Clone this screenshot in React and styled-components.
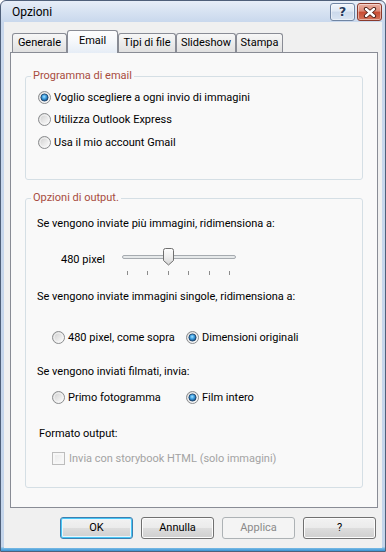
import React from 'react';
import styled, { createGlobalStyle } from 'styled-components';

const FONT = `Roboto, "Noto Sans", "Liberation Sans", sans-serif`;

const GlobalStyle = createGlobalStyle`
  html, body { margin: 0; padding: 0; background: #ffffff; }
  body { font-family: ${FONT}; }
  * { box-sizing: border-box; }
`;

const Window = styled.div`
  width: 386px;
  height: 552px;
  display: flex;
  flex-direction: column;
  border: 1px solid #4f607a;
  border-radius: 6px 6px 0 0;
  padding: 0 3px 3px;
  background: linear-gradient(
    to bottom,
    #e7eef8 0px,
    #d5e1f1 12px,
    #c9d8ed 21px,
    #c4d5eb calc(100% - 4px),
    #7bbce6 calc(100% - 3px),
    #3a93d3 100%
  );
  font-family: ${FONT};
  font-size: 11px;
  color: #000;
  overflow: hidden;
`;

const TitleBar = styled.div`
  height: 21px;
  flex-shrink: 0;
  display: flex;
  align-items: flex-start;
`;

const Title = styled.div`
  flex: 1;
  padding-left: 8px;
  font-size: 12px;
  line-height: 22px;
  color: #000;
`;

const CaptionButtons = styled.div`
  display: flex;
  gap: 2px;
  margin-top: 2px;
`;

const CaptionButton = styled.div`
  width: 25px;
  height: 18px;
  border-radius: 3px;
  border: 1px solid ${p => (p.$close ? '#8a3a2c' : '#7085a3')};
  background: ${p =>
    p.$close
      ? 'linear-gradient(#eab0a2 0%, #dc8a77 45%, #c84a30 50%, #d3735a 100%)'
      : 'linear-gradient(#f1f5fb 0%, #dfe8f4 45%, #cbd9eb 50%, #d9e4f2 100%)'};
  box-shadow: inset 0 0 0 1px rgba(255, 255, 255, 0.45);
  display: flex;
  align-items: center;
  justify-content: center;
`;

const HelpGlyph = styled.span`
  font-family: "DejaVu Sans", ${FONT};
  font-weight: bold;
  font-size: 13px;
  line-height: 16px;
  color: #253a5c;
  text-shadow: 0 0 1px #fff, 0 0 1px #fff, 0 0 2px #fff;
`;

const Client = styled.div`
  flex: 1;
  display: flex;
  flex-direction: column;
  background: #f0f0f0;
  padding: 8px 4px 0 6px;
`;

const TabStrip = styled.div`
  height: 22px;
  flex-shrink: 0;
  display: flex;
  align-items: flex-end;
  padding-left: 2px;
  position: relative;
  z-index: 1;
`;

const Tab = styled.div`
  width: ${p => p.$w}px;
  height: ${p => (p.$active ? 23 : 19)}px;
  margin-bottom: ${p => (p.$active ? -1 : 0)}px;
  padding-top: ${p => (p.$active ? 1 : 0)}px;
  border: 1px solid #898c95;
  border-bottom: none;
  border-radius: 3px 3px 0 0;
  background: ${p =>
    p.$active
      ? 'linear-gradient(#fdfdfe 0%, #f6f8fb 45%, #e6edf6 100%)'
      : 'linear-gradient(#f7f7f7 0%, #ececec 50%, #e0e0e0 100%)'};
  text-align: center;
  line-height: 18px;
  white-space: nowrap;
  color: #000;
`;

const Panel = styled.div`
  flex: 1;
  display: flex;
  flex-direction: column;
  border: 1px solid #898c95;
  background: #f9f9f9;
  padding: 16px 14px 0;
`;

const Group = styled.fieldset`
  margin: ${p => p.$top || 0}px 0 0;
  padding: 0;
  border: 1px solid #d5dfe5;
  border-radius: 3px;
  min-width: 0;
`;

const Legend = styled.legend`
  margin-left: 5px;
  padding: 0 2px;
  line-height: 14px;
  font-size: 11px;
  color: #a84c40;
`;

const GroupBody = styled.div`
  display: flex;
  flex-direction: column;
  padding: ${p => p.$pad};
`;

const StackOption = styled.label`
  height: 22.5px;
  display: flex;
  align-items: center;
  gap: 3px;
  white-space: nowrap;
`;

const Line = styled.div`
  height: 20px;
  line-height: 20px;
  margin-top: ${p => p.$top}px;
  padding-left: ${p => p.$indent || 0}px;
  white-space: nowrap;
`;

const SliderRow = styled.div`
  height: 34px;
  margin-top: ${p => p.$top}px;
  padding-left: 24px;
  display: flex;
  align-items: flex-start;
`;

const SliderLabel = styled.span`
  width: 61px;
  margin-top: 10px;
  line-height: 16px;
  white-space: nowrap;
`;

const Slider = styled.div`
  position: relative;
  width: 114px;
  padding-top: 13px;
`;

const Track = styled.div`
  height: 4px;
  border: 1px solid #a6abb0;
  border-radius: 2px;
  background: #e6e9ea;
`;

const Ticks = styled.div`
  display: flex;
  justify-content: space-between;
  padding: 0 6px 0 5px;
  margin-top: 12px;
`;

const Tick = styled.span`
  width: 1px;
  height: 4px;
  background: #8c8c8c;
`;

const ThumbSvg = styled.svg`
  position: absolute;
  top: 6px;
  display: block;
`;

const OptionRow = styled.div`
  height: 20px;
  margin-top: ${p => p.$top}px;
  padding-left: 15px;
  display: grid;
  grid-template-columns: 134px auto;
  align-items: center;
`;

const Option = styled.label`
  display: flex;
  align-items: center;
  gap: 3px;
  white-space: nowrap;
`;

const CheckRow = styled.label`
  height: 20px;
  margin-top: ${p => p.$top}px;
  padding-left: 15px;
  display: flex;
  align-items: center;
  gap: 4px;
  color: #a3a3a3;
  white-space: nowrap;
`;

const CheckBox = styled.span`
  width: 13px;
  height: 13px;
  border: 1px solid #bdbdbd;
  background: linear-gradient(135deg, #e9e9e9, #fbfbfb);
  box-shadow: inset 0 0 0 2px #f7f7f7;
`;

const ButtonRow = styled.div`
  flex-shrink: 0;
  display: flex;
  justify-content: flex-end;
  gap: 8px;
  padding: 9px 2px 9px 0;
`;

const Button = styled.button`
  width: 73px;
  height: 22px;
  padding: 0;
  border-radius: 3px;
  font-family: ${FONT};
  font-size: 11px;
  line-height: 20px;
  border: 1px solid ${p => (p.$default ? '#3c7fb1' : p.disabled ? '#adb2b5' : '#707070')};
  color: ${p => (p.disabled ? '#8a8a8a' : '#000')};
  background: ${p =>
    p.disabled
      ? '#f4f4f4'
      : 'linear-gradient(#f2f2f2 0%, #ebebeb 50%, #dddddd 50%, #cfcfcf 100%)'};
  box-shadow: ${p =>
    p.$default
      ? 'inset 0 0 0 1px #48c6f5, inset 0 0 0 2px #e8f6fd'
      : p.disabled
      ? 'none'
      : 'inset 0 0 0 1px #fcfcfc'};
`;

const Radio = ({ checked }) => (
  <svg width="13" height="13" viewBox="0 0 13 13" style={{ display: 'block', flexShrink: 0 }}>
    <defs>
      <linearGradient id="rbg" x1="0" y1="0" x2="1" y2="1">
        <stop offset="0" stopColor="#c9c9c9" />
        <stop offset="0.6" stopColor="#ececec" />
        <stop offset="1" stopColor="#ffffff" />
      </linearGradient>
      <radialGradient id="rdot" cx="0.45" cy="0.4" r="0.65">
        <stop offset="0" stopColor="#a6e2ff" />
        <stop offset="0.45" stopColor="#3c9ee0" />
        <stop offset="1" stopColor="#0f3c6e" />
      </radialGradient>
    </defs>
    <circle cx="6.5" cy="6.5" r="6" fill="url(#rbg)" stroke="#8a8c8e" />
    <circle cx="6.5" cy="6.5" r="4.5" fill="none" stroke="#f6f6f6" strokeWidth="0.8" />
    {checked && <circle cx="6.5" cy="6.5" r="3.6" fill="url(#rdot)" stroke="#1b3f66" strokeWidth="0.8" />}
  </svg>
);

const Thumb = ({ left }) => (
  <ThumbSvg width="11" height="18" viewBox="0 0 11 18" style={{ left }}>
    <defs>
      <linearGradient id="thg" x1="0" y1="0" x2="0" y2="1">
        <stop offset="0" stopColor="#fefefe" />
        <stop offset="0.5" stopColor="#eeeeee" />
        <stop offset="1" stopColor="#d4d4d4" />
      </linearGradient>
    </defs>
    <path
      d="M0.5 2.5 Q0.5 0.5 2.5 0.5 H8.5 Q10.5 0.5 10.5 2.5 V12.5 L5.5 17 L0.5 12.5 Z"
      fill="url(#thg)"
      stroke="#6f6f6f"
    />
  </ThumbSvg>
);

const CloseIcon = () => (
  <svg width="14" height="11" viewBox="0 0 14 11" style={{ display: 'block' }}>
    <path d="M3 2 L11 9 M11 2 L3 9" stroke="#4b1d14" strokeWidth="4.2" strokeLinecap="round" />
    <path d="M3 2 L11 9 M11 2 L3 9" stroke="#ffffff" strokeWidth="2.4" strokeLinecap="round" />
  </svg>
);

const tabs = [
  { label: 'Generale', w: 55 },
  { label: 'Email', w: 51, active: true },
  { label: 'Tipi di file', w: 58 },
  { label: 'Slideshow', w: 60 },
  { label: 'Stampa', w: 47 },
];

const TICKS = 6;
const sliderValue = 2;

export default function App() {
  const thumbLeft = Math.round((sliderValue * 102) / (TICKS - 1));
  return (
    <>
      <GlobalStyle />
      <Window>
        <TitleBar>
          <Title>Opzioni</Title>
          <CaptionButtons>
            <CaptionButton>
              <HelpGlyph>?</HelpGlyph>
            </CaptionButton>
            <CaptionButton $close>
              <CloseIcon />
            </CaptionButton>
          </CaptionButtons>
        </TitleBar>
        <Client>
          <TabStrip>
            {tabs.map(t => (
              <Tab key={t.label} $w={t.w} $active={t.active}>
                {t.label}
              </Tab>
            ))}
          </TabStrip>
          <Panel>
            <Group>
              <Legend>Programma di email</Legend>
              <GroupBody $pad="3px 12px 25.5px">
                <StackOption>
                  <Radio checked />
                  Voglio scegliere a ogni invio di immagini
                </StackOption>
                <StackOption>
                  <Radio />
                  Utilizza Outlook Express
                </StackOption>
                <StackOption>
                  <Radio />
                  Usa il mio account Gmail
                </StackOption>
              </GroupBody>
            </Group>
            <Group $top={11}>
              <Legend>Opzioni di output.</Legend>
              <GroupBody $pad="0 11px 19px">
                <Line $top={9}>Se vengono inviate più immagini, ridimensiona a:</Line>
                <SliderRow $top={8}>
                  <SliderLabel>480 pixel</SliderLabel>
                  <Slider>
                    <Track />
                    <Ticks>
                      {Array.from({ length: TICKS }).map((_, i) => (
                        <Tick key={i} />
                      ))}
                    </Ticks>
                    <Thumb left={thumbLeft} />
                  </Slider>
                </SliderRow>
                <Line $top={11}>Se vengono inviate immagini singole, ridimensiona a:</Line>
                <OptionRow $top={20}>
                  <Option>
                    <Radio />
                    480 pixel, come sopra
                  </Option>
                  <Option>
                    <Radio checked />
                    Dimensioni originali
                  </Option>
                </OptionRow>
                <Line $top={15}>Se vengono inviati filmati, invia:</Line>
                <OptionRow $top={5}>
                  <Option>
                    <Radio />
                    Primo fotogramma
                  </Option>
                  <Option>
                    <Radio checked />
                    Film intero
                  </Option>
                </OptionRow>
                <Line $top={17} $indent={2}>Formato output:</Line>
                <CheckRow $top={4}>
                  <CheckBox />
                  Invia con storybook HTML (solo immagini)
                </CheckRow>
              </GroupBody>
            </Group>
          </Panel>
          <ButtonRow>
            <Button $default>OK</Button>
            <Button>Annulla</Button>
            <Button disabled>Applica</Button>
            <Button>?</Button>
          </ButtonRow>
        </Client>
      </Window>
    </>
  );
}
